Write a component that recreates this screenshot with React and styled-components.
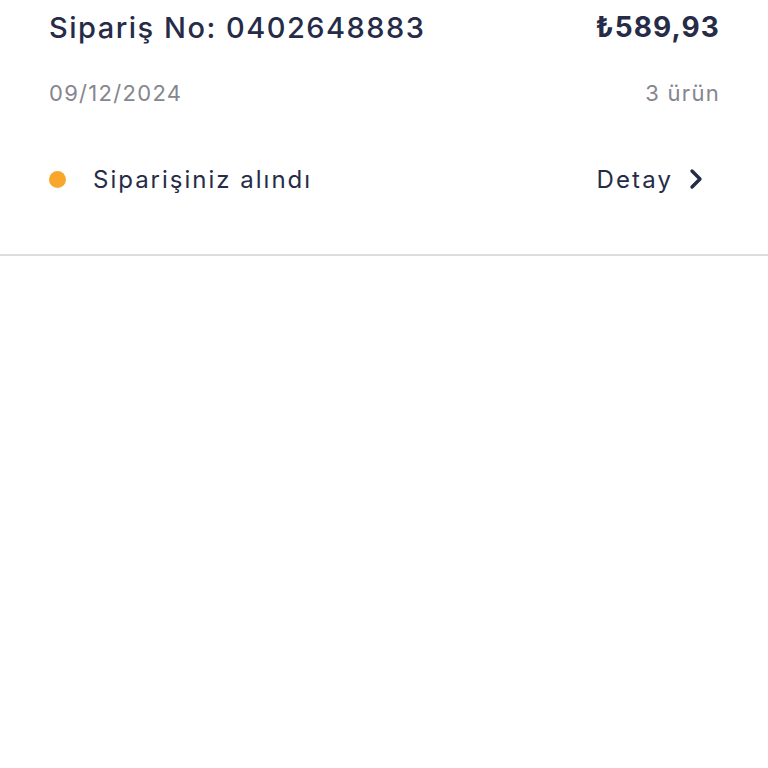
import React from "react";
import styled, { createGlobalStyle } from "styled-components";

const Global = createGlobalStyle`
  html, body { margin: 0; padding: 0; background: #fff; }
  body { font-family: Inter, "Open Sans", "Liberation Sans", sans-serif; }
`;

const Card = styled.section`
  padding: 0 48px 0 49px;
  border-bottom: 2px solid #dcdcdf;
  height: 256px;
  box-sizing: border-box;
`;

const Row = styled.div`
  display: flex;
  justify-content: space-between;
  align-items: center;
  height: ${p => p.$h}px;
`;

const Title = styled.div`
  font-size: 29px;
  font-weight: 500;
  color: #262c47;
  letter-spacing: 1.5px;
`;

const Price = styled.div`
  font-size: 28px;
  font-weight: 700;
  color: #262c47;
  letter-spacing: 1.1px;
`;

const Muted = styled.div`
  font-size: 22px;
  color: #85868f;
  letter-spacing: 1.3px;
`;

const Status = styled.div`
  display: flex;
  align-items: center;
  gap: 27px;
  font-size: 24px;
  color: #262c47;
  letter-spacing: 2px;
`;

const Dot = styled.span`
  width: 17px;
  height: 17px;
  border-radius: 50%;
  background: #f9a72b;
`;

const Detail = styled.div`
  display: flex;
  align-items: center;
  gap: 16px;
  font-size: 24px;
  color: #262c47;
  letter-spacing: 2.1px;
  margin-right: 17px;
`;

export default function App() {
  return (
    <>
      <Global />
      <Card>
        <Row $h={54}>
          <Title>Sipariş No: 0402648883</Title>
          <Price>₺589,93</Price>
        </Row>
        <Row $h={78}>
          <Muted>09/12/2024</Muted>
          <Muted>3 ürün</Muted>
        </Row>
        <Row $h={94}>
          <Status><Dot />Siparişiniz alındı</Status>
          <Detail>
            Detay
            <svg width="14" height="22" viewBox="0 0 14 22" fill="none">
              <path d="M3 3l8 8-8 8" stroke="#262c47" strokeWidth="3.4" strokeLinecap="round" strokeLinejoin="round" />
            </svg>
          </Detail>
        </Row>
      </Card>
    </>
  );
}
